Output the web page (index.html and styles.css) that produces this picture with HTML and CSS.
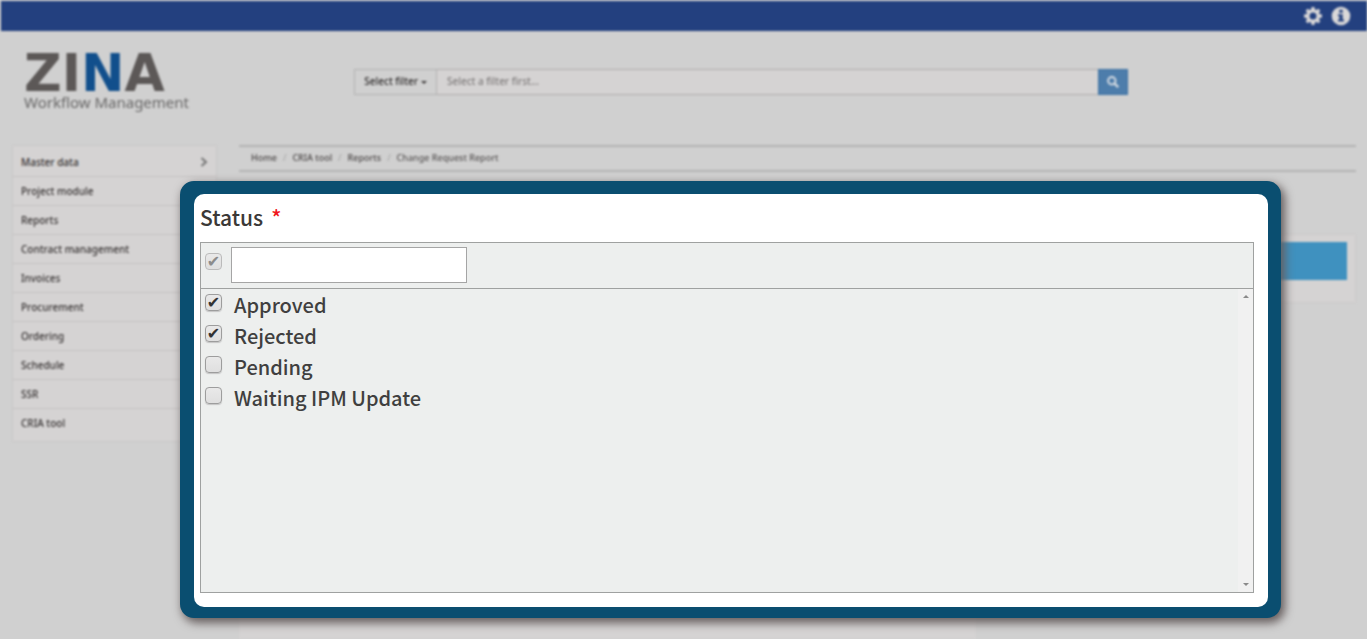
FILE: index.html
```html
<!DOCTYPE html>
<html lang="en">
<head>
<meta charset="utf-8">
<title>Zina Workflow Management</title>
<link rel="stylesheet" href="styles.css">
</head>
<body>
<div class="page">
  <nav class="topbar">
    <button class="icon-button" type="button" aria-label="Settings">
      <svg viewBox="0 0 20 20" width="20" height="20"><g fill="#dad8d8"><circle cx="10" cy="10" r="6.8"/><path id="tooth" d="M8 4 8.6 1h2.8l.6 3zM8 16 8.6 19h2.8l.6-3zM4 8 1 8.6v2.8l3 .6zM16 8l3 .6v2.8l-3 .6z"/><use href="#tooth" transform="rotate(45 10 10)"/></g><circle cx="10" cy="10" r="3.5" fill="#23407f"/></svg>
    </button>
    <button class="icon-button" type="button" aria-label="Information">
      <svg viewBox="0 0 20 20" width="20" height="20"><circle cx="10" cy="10" r="9.3" fill="#dad8d8"/><path d="M8.3 3.8h3.4v2.9H8.3zM7 8.2h4.7v5.3H13v2H7v-2h1.3v-3.3H7z" fill="#23407f"/></svg>
    </button>
  </nav>
  <header class="header">
    <div class="logo"><span class="logo-name">ZI<span class="logo-accent">N</span>A</span><span class="logo-tag">Workflow Management</span></div>
    <form class="search">
      <button class="filter" type="button">Select filter <span class="caret"></span></button>
      <input class="search-input" type="text" aria-label="Search" placeholder="Select a filter first...">
      <button class="search-button" type="button" aria-label="Search">
        <svg viewBox="0 0 12 12" width="12" height="12" fill="none" stroke="#d5dbe2"><circle cx="4.8" cy="4.8" r="3.7" stroke-width="2"/><path d="m7.5 7.5 3.7 3.7" stroke-width="2.4"/></svg>
      </button>
    </form>
  </header>
  <div class="columns">
    <ul class="menu">
      <li><a href="#">Master data<svg viewBox="0 0 8 10" width="8" height="10" fill="none" stroke="#777" stroke-width="2"><path d="m1.5 1 4.5 4-4.5 4"/></svg></a></li>
      <li><a href="#">Project module</a></li>
      <li><a href="#">Reports</a></li>
      <li><a href="#">Contract management</a></li>
      <li><a href="#">Invoices</a></li>
      <li><a href="#">Procurement</a></li>
      <li><a href="#">Ordering</a></li>
      <li><a href="#">Schedule</a></li>
      <li><a href="#">SSR</a></li>
      <li><a href="#">CRIA tool</a></li>
    </ul>
    <main class="content">
      <ol class="crumbs">
        <li><a href="#">Home</a></li>
        <li><a href="#">CRIA tool</a></li>
        <li><a href="#">Reports</a></li>
        <li>Change Request Report</li>
      </ol>
      <div class="panels">
        <section class="form-panel"></section>
        <section class="action-panel"><div class="action-bar"></div></section>
      </div>
    </main>
  </div>
</div>
<div class="overlay">
  <section class="dialog" role="dialog" aria-labelledby="status-title">
    <h1 class="title" id="status-title">Status <span class="required">*</span></h1>
    <div class="picker">
      <div class="picker-head">
        <input class="tick" type="checkbox" aria-label="Select all" checked disabled>
        <input class="picker-search" type="text" aria-label="Filter statuses">
      </div>
      <div class="picker-body">
        <div class="options">
          <label class="option"><input class="tick" type="checkbox" checked><span>Approved</span></label>
          <label class="option"><input class="tick" type="checkbox" checked><span>Rejected</span></label>
          <label class="option"><input class="tick" type="checkbox"><span>Pending</span></label>
          <label class="option"><input class="tick" type="checkbox"><span>Waiting IPM Update</span></label>
        </div>
        <div class="scrollbar"><span class="arrow-up"></span><span class="arrow-down"></span></div>
      </div>
    </div>
  </section>
</div>
</body>
</html>
```
FILE: styles.css
```css
* { box-sizing: border-box; }
body {
  margin: 0;
  height: 100vh;
  overflow: hidden;
  background: #d0d0d0;
  color: #4c4848;
  font-family: "Noto Sans", "Open Sans", sans-serif;
}
button, input { font: inherit; color: inherit; }
a { color: inherit; text-decoration: none; }
ul, ol { list-style: none; margin: 0; padding: 0; }

.page {
  display: flex;
  flex-direction: column;
  height: 100vh;
  font-size: 10px;
  font-weight: 500;
  filter: blur(1px);
}
.topbar {
  display: flex;
  justify-content: flex-end;
  align-items: center;
  gap: 8px;
  height: 30px;
  margin: 1px 0 0 1px;
  padding-right: 16px;
  background: #23407f;
}
.icon-button { display: flex; padding: 0; border: 0; background: none; }
.header { display: flex; height: 114px; padding: 0 24px; }
.logo { display: flex; flex-direction: column; width: 330px; padding-top: 21px; }
.logo-name {
  color: #5c5857;
  font: bold 52px/42px "DejaVu Sans", sans-serif;
}
.logo-accent { color: #114f8c; }
.logo-tag { color: #696868; font-size: 15px; font-weight: 400; line-height: 16px; }

.search { display: flex; width: 774px; height: 26px; margin-top: 38px; }
.filter {
  width: 83px;
  padding: 0 0 2px;
  border: 1px solid #b2b2b2;
  background: #d0d0d0;
  color: #2f2c2c;
  font-size: 10px;
}
.caret {
  display: inline-block;
  border: 3px solid transparent;
  border-top-color: #403d3d;
  border-bottom: 0;
  vertical-align: middle;
}
.search-input {
  flex: 1;
  min-width: 0;
  padding: 0 10px 2px;
  border: 1px solid #b0aeae;
  border-width: 1px 0;
  background: #d5d3d3;
  font-size: 10px;
}
.search-input::placeholder { color: #807d7d; opacity: 1; }
.search-button {
  display: flex;
  align-items: center;
  justify-content: center;
  width: 30px;
  padding: 0;
  border: 1px solid #3f74a5;
  background: #4d7dab;
}

.columns { display: flex; flex: 1; min-height: 0; padding: 0 11px 0 12px; gap: 22px; align-items: stretch; }
.menu {
  align-self: flex-start;
  width: 205px;
  border: 1px solid #cac8c8;
  background: #d5d3d3;
  color: #363232;
}
.menu a {
  display: flex;
  align-items: center;
  justify-content: space-between;
  height: 29px;
  padding: 0 8px;
  border-bottom: 1px solid #c4c2c2;
}
.menu li:first-child a { height: 31px; padding-top: 2px; }
.menu li:last-child a { height: 32px; border: 0; padding-bottom: 4px; }
.content { display: flex; flex: 1; flex-direction: column; min-width: 0; }
.crumbs {
  display: flex;
  align-items: center;
  height: 27px;
  padding: 0 0 2px 12px;
  border: solid #b4b4b4;
  border-width: 2px 0;
  font-size: 9px;
}
.crumbs li + li::before { content: "/"; margin: 0 6px; color: #aaa; }
.crumbs li:last-child { color: #585555; }
.panels { display: flex; flex: 1; justify-content: space-between; align-items: flex-start; padding-top: 62px; }
.form-panel { width: 66%; height: 100%; background: #d5d3d3; }
.action-panel { width: 33%; padding: 7px 8px 22px; background: #d5d3d3; border: 1px solid #cdcbcb; }
.action-bar { height: 38px; background: #3f91bf; }

.overlay { position: absolute; inset: 0; padding: 181px 86px 21px 180px; }
.dialog {
  display: flex;
  flex-direction: column;
  height: 100%;
  padding: 8px 14px 14px 6px;
  border: solid #0a4e70;
  border-width: 13px 13px 11px 14px;
  border-radius: 14px;
  background: #0a4e70;
  box-shadow: 3px 4px 10px 1px #665e5e;
  position: relative;
  z-index: 0;
}
.dialog::before {
  content: "";
  position: absolute;
  inset: 0;
  z-index: -1;
  border-radius: 10px;
  background: #fff;
}
.title { display: flex; gap: 8px; margin: 0; color: #3b3937; font-family: "Noto Sans CJK SC", "Noto Sans", sans-serif; font-size: 21px; line-height: 30px; font-weight: 500; }
.required { color: #f01620; }
.picker {
  display: flex;
  flex: 1;
  flex-direction: column;
  margin-top: 10px;
  border: 1px solid #9fa1a0;
  background: #edefee;
}
.picker-head {
  display: flex;
  align-items: center;
  gap: 9px;
  height: 46px;
  padding: 0 0 1px 4px;
  border-bottom: 1px solid #9fa1a0;
}
.picker-search { width: 236px; height: 36px; border: 1px solid #a5a5a5; background: #fff; font-size: 18px; }
.picker-body { display: flex; flex: 1; justify-content: space-between; }
.options { padding: 0 4px; color: #403f3f; font-family: "Noto Sans CJK SC", "Noto Sans", sans-serif; font-size: 20px; font-weight: 500; }
.option { display: flex; align-items: flex-start; gap: 12px; height: 31px; line-height: 32px; }
.tick {
  display: flex;
  flex: none;
  align-items: center;
  justify-content: center;
  appearance: none;
  width: 17px;
  height: 17px;
  margin: 0;
  border: 1px solid #9d9d9d;
  border-radius: 4px;
  background: linear-gradient(#e9e9e9, #dfdfdf);
  box-shadow: 0 1px 1px #c4c4c4;
}
.option .tick { margin-top: 5px; }
.picker-head .tick { margin-bottom: 8px; border-color: #bbb; box-shadow: none; }
.tick:checked::after { content: "✔"; color: #333; font: bold 16px/15px "DejaVu Sans", sans-serif; }
.tick:disabled::after { color: #8c8c8c; }
.scrollbar {
  display: flex;
  flex-direction: column;
  justify-content: space-between;
  align-items: center;
  width: 15px;
  padding: 6px 0;
  background: #f1f1f1;
}
.arrow-up, .arrow-down { border: 3px solid transparent; }
.arrow-up { border-top: 0; border-bottom-color: #8a8a8a; }
.arrow-down { border-bottom: 0; border-top-color: #8a8a8a; }
```
